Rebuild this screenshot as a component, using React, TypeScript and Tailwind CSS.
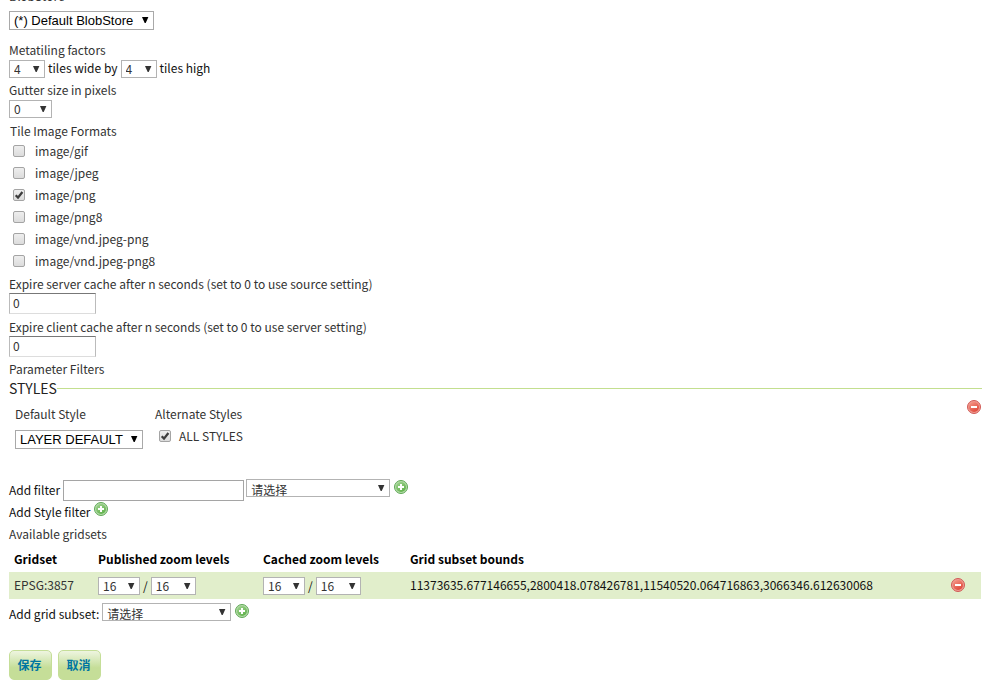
import { useId, useState } from "react";
import type { ReactNode } from "react";

function Arrow() {
  return (
    <svg viewBox="0 0 7 7" className="pointer-events-none absolute top-[6px] right-[5px] h-[7px] w-[7px]" aria-hidden="true">
      <path d="M0 0H6.4L3.7 6H2.7Z" fill="currentColor" />
    </svg>
  );
}

type SelectProps = { label: string; options: string[]; className: string };

function Select({ label, options, className }: SelectProps) {
  return (
    <span className="relative inline-flex text-[#333]">
      <select
        aria-label={label}
        className={`h-[18px] appearance-none rounded-none border border-[#b3b3b3] bg-white pl-1 text-[12px] leading-4 ${className}`}
      >
        {options.map((o) => (
          <option key={o}>{o}</option>
        ))}
      </select>
      <Arrow />
    </span>
  );
}

function SystemSelect({ label, options, className }: SelectProps) {
  return (
    <span className="relative inline-flex text-black">
      <select
        aria-label={label}
        className={`h-[19px] appearance-none rounded-none border border-[#a9a9a9] bg-white pl-1 font-['Liberation_Sans',Arial,sans-serif] text-[13px] leading-4 ${className}`}
      >
        {options.map((o) => (
          <option key={o}>{o}</option>
        ))}
      </select>
      <Arrow />
    </span>
  );
}

function Check({ label, checked = false, className = "" }: { label: string; checked?: boolean; className?: string }) {
  const id = useId();
  const [on, setOn] = useState(checked);
  return (
    <div className={`flex items-center ${className}`}>
      <span className="relative inline-flex">
        <input
          id={id}
          type="checkbox"
          checked={on}
          onChange={(e) => setOn(e.target.checked)}
          className="h-3 w-3 appearance-none rounded-[2px] border border-[#a4a4a4] bg-linear-to-b from-[#eeeeee] to-[#dcdcdc]"
        />
        {on && (
          <svg viewBox="0 0 12 12" className="pointer-events-none absolute inset-0 h-3 w-3" aria-hidden="true">
            <path d="M2.7 6.3L5 8.6L9.4 3" fill="none" stroke="#3d3d3d" strokeWidth="2.3" />
          </svg>
        )}
      </span>
      <label htmlFor={id}>{label}</label>
    </div>
  );
}

function RoundButton({ kind, label, className = "" }: { kind: "add" | "remove"; label: string; className?: string }) {
  const add = kind === "add";
  const id = useId();
  return (
    <button type="button" aria-label={label} className={`h-[14px] w-[14px] shrink-0 ${className}`}>
      <svg viewBox="0 0 14 14" className="block h-[14px] w-[14px]">
        <defs>
          <linearGradient id={id} x1="0" y1="0" x2="0.6" y2="1">
            <stop offset="0" stopColor={add ? "#a3d494" : "#f59a8a"} />
            <stop offset="1" stopColor={add ? "#62b34d" : "#e04b3d"} />
          </linearGradient>
        </defs>
        <circle cx="7" cy="7" r="6.5" fill={add ? "#b5dca9" : "#f09a90"} stroke={add ? "#5fa856" : "#d05a55"} />
        <circle cx="7" cy="7" r="5" fill={`url(#${id})`} />
        <rect x="4" y="6" width="6" height="2" fill="#fff" />
        {add && <rect x="6" y="4" width="2" height="6" fill="#fff" />}
      </svg>
    </button>
  );
}

function NumberField({ label }: { label: string }) {
  const id = useId();
  return (
    <div className="flex flex-col items-start">
      <label htmlFor={id}>{label}</label>
      <input
        id={id}
        defaultValue="0"
        className="h-[21px] w-[87px] border border-[#bbb] border-t-[#777] border-b-[#ddd] bg-white pb-[2px] pl-[3px] text-[12px] leading-4"
      />
    </div>
  );
}

function ActionButton({ children }: { children: ReactNode }) {
  return (
    <button
      type="button"
      className="h-[30px] min-w-[43px] rounded-[5px] border border-[#c5de98] bg-linear-to-b from-[#eef5e0] to-[#c5de98] to-60% pr-[9px] pl-[7px] text-[12px] font-bold text-[#0076a1]"
    >
      {children}
    </button>
  );
}

const formats = ["image/gif", "image/jpeg", "image/png", "image/png8", "image/vnd.jpeg-png", "image/vnd.jpeg-png8"];
const levels = ["16", "17", "18"];

export default function App() {
  return (
    <form
      onSubmit={(e) => e.preventDefault()}
      className="bg-white pr-[21px] pl-[9px] font-['Noto_Sans_CJK_SC',sans-serif] text-[12px] leading-[18px] text-[#333]"
    >
      <div className="flex h-[11px] flex-col justify-end overflow-hidden pb-[6px]">
        <span>BlobStore</span>
      </div>
      <div className="flex">
        <SystemSelect label="BlobStore" options={["(*) Default BlobStore"]} className="w-[145px]" />
      </div>

      <div className="mt-[11px]">Metatiling factors</div>
      <div className="mt-px flex gap-[3px] text-[#111]">
        <Select label="Tiles wide" options={["4", "5", "6"]} className="w-9 pb-[2px]" />
        <span className="-mt-px">tiles wide by</span>
        <Select label="Tiles high" options={["4", "5", "6"]} className="w-9 pb-[2px]" />
        <span className="-mt-px">tiles high</span>
      </div>

      <div className="mt-[3px]">Gutter size in pixels</div>
      <div className="mt-px flex">
        <Select label="Gutter size in pixels" options={["0", "10", "20"]} className="w-[43px] pb-[2px]" />
      </div>

      <fieldset className="mt-1">
        <legend className="pl-px">Tile Image Formats</legend>
        {formats.map((f) => (
          <Check key={f} label={f} checked={f === "image/png"} className="h-[22px] gap-[10px] pl-1" />
        ))}
      </fieldset>

      <div className="mt-[3px] flex flex-col gap-1">
        <NumberField label="Expire server cache after n seconds (set to 0 to use source setting)" />
        <NumberField label="Expire client cache after n seconds (set to 0 to use server setting)" />
      </div>

      <div className="mt-[3px]">Parameter Filters</div>
      <section className="mt-px">
        <div className="-mr-px flex items-center">
          <h3 className="text-[14px] leading-[18px] text-[#222]">STYLES</h3>
          <div className="flex-1 border-t border-[#c3df8f]" />
        </div>
        <div className="flex h-[82px] items-start pl-[6px]">
          <div className="flex w-[140px] flex-col items-start gap-[7px] pt-2">
            <span>Default Style</span>
            <SystemSelect label="Default Style" options={["LAYER DEFAULT"]} className="w-32" />
          </div>
          <div className="flex flex-1 flex-col gap-1 pt-2">
            <span>Alternate Styles</span>
            <Check label="ALL STYLES" checked className="gap-2 pl-1" />
          </div>
          <RoundButton kind="remove" label="Remove STYLES filter" className="mt-[3px]" />
        </div>
      </section>

      <div className="flex items-start text-[#111]">
        <label htmlFor="filter" className="mt-[2px]">Add filter</label>
        <input id="filter" className="mt-px ml-[3px] h-[21px] w-[181px] border border-[#a5a5a5] px-1" />
        <span className="ml-[2px] flex items-start gap-1">
          <Select label="Filter type" options={["请选择"]} className="w-36 pt-[2px]" />
          <RoundButton kind="add" label="Add filter" className="mt-px" />
        </span>
      </div>
      <div className="flex items-start gap-1 text-[#111]">
        <span className="mt-[2px]">Add Style filter</span>
        <RoundButton kind="add" label="Add Style filter" className="mt-px" />
      </div>

      <div className="mt-1">Available gridsets</div>
      <table className="mt-[6px] w-full border-collapse text-left text-[#111]">
        <thead>
          <tr className="h-[23px] align-top text-black">
            <th className="w-[84px] pt-px pl-[5px]">Gridset</th>
            <th className="w-[165px] pt-px pl-[5px]">Published zoom levels</th>
            <th className="w-[147px] pt-px pl-[5px]">Cached zoom levels</th>
            <th className="pt-px pl-[5px]">Grid subset bounds</th>
            <th className="w-[35px]" />
          </tr>
        </thead>
        <tbody>
          <tr className="h-[27px] bg-[#e1eecb]">
            <td className="pb-[2px] pl-[5px] text-[#333]">EPSG:3857</td>
            {["Published", "Cached"].map((n) => (
              <td key={n} className="pl-[5px]">
                <div className="flex gap-[3px]">
                  <Select label={`${n} minimum zoom`} options={levels} className="w-[42px] pb-[2px]" />
                  /
                  <Select label={`${n} maximum zoom`} options={levels} className="w-[45px] pb-[2px]" />
                </div>
              </td>
            ))}
            <td className="pb-[2px] pl-[5px]">11373635.677146655,2800418.078426781,11540520.064716863,3066346.612630068</td>
            <td className="pb-[2px] pl-[5px]">
              <div className="flex">
                <RoundButton kind="remove" label="Remove grid subset" />
              </div>
            </td>
          </tr>
        </tbody>
      </table>
      <div className="mt-1 flex items-start text-[#111]">
        <span className="mt-[2px] mr-[3px]">Add grid subset:</span>
        <span className="flex items-start gap-1">
          <Select label="Grid subset" options={["请选择"]} className="w-[129px] pt-[2px]" />
          <RoundButton kind="add" label="Add grid subset" className="mt-px" />
        </span>
      </div>

      <div className="mt-[27px] flex gap-[6px] pb-4">
        <ActionButton>保存</ActionButton>
        <ActionButton>取消</ActionButton>
      </div>
    </form>
  );
}
